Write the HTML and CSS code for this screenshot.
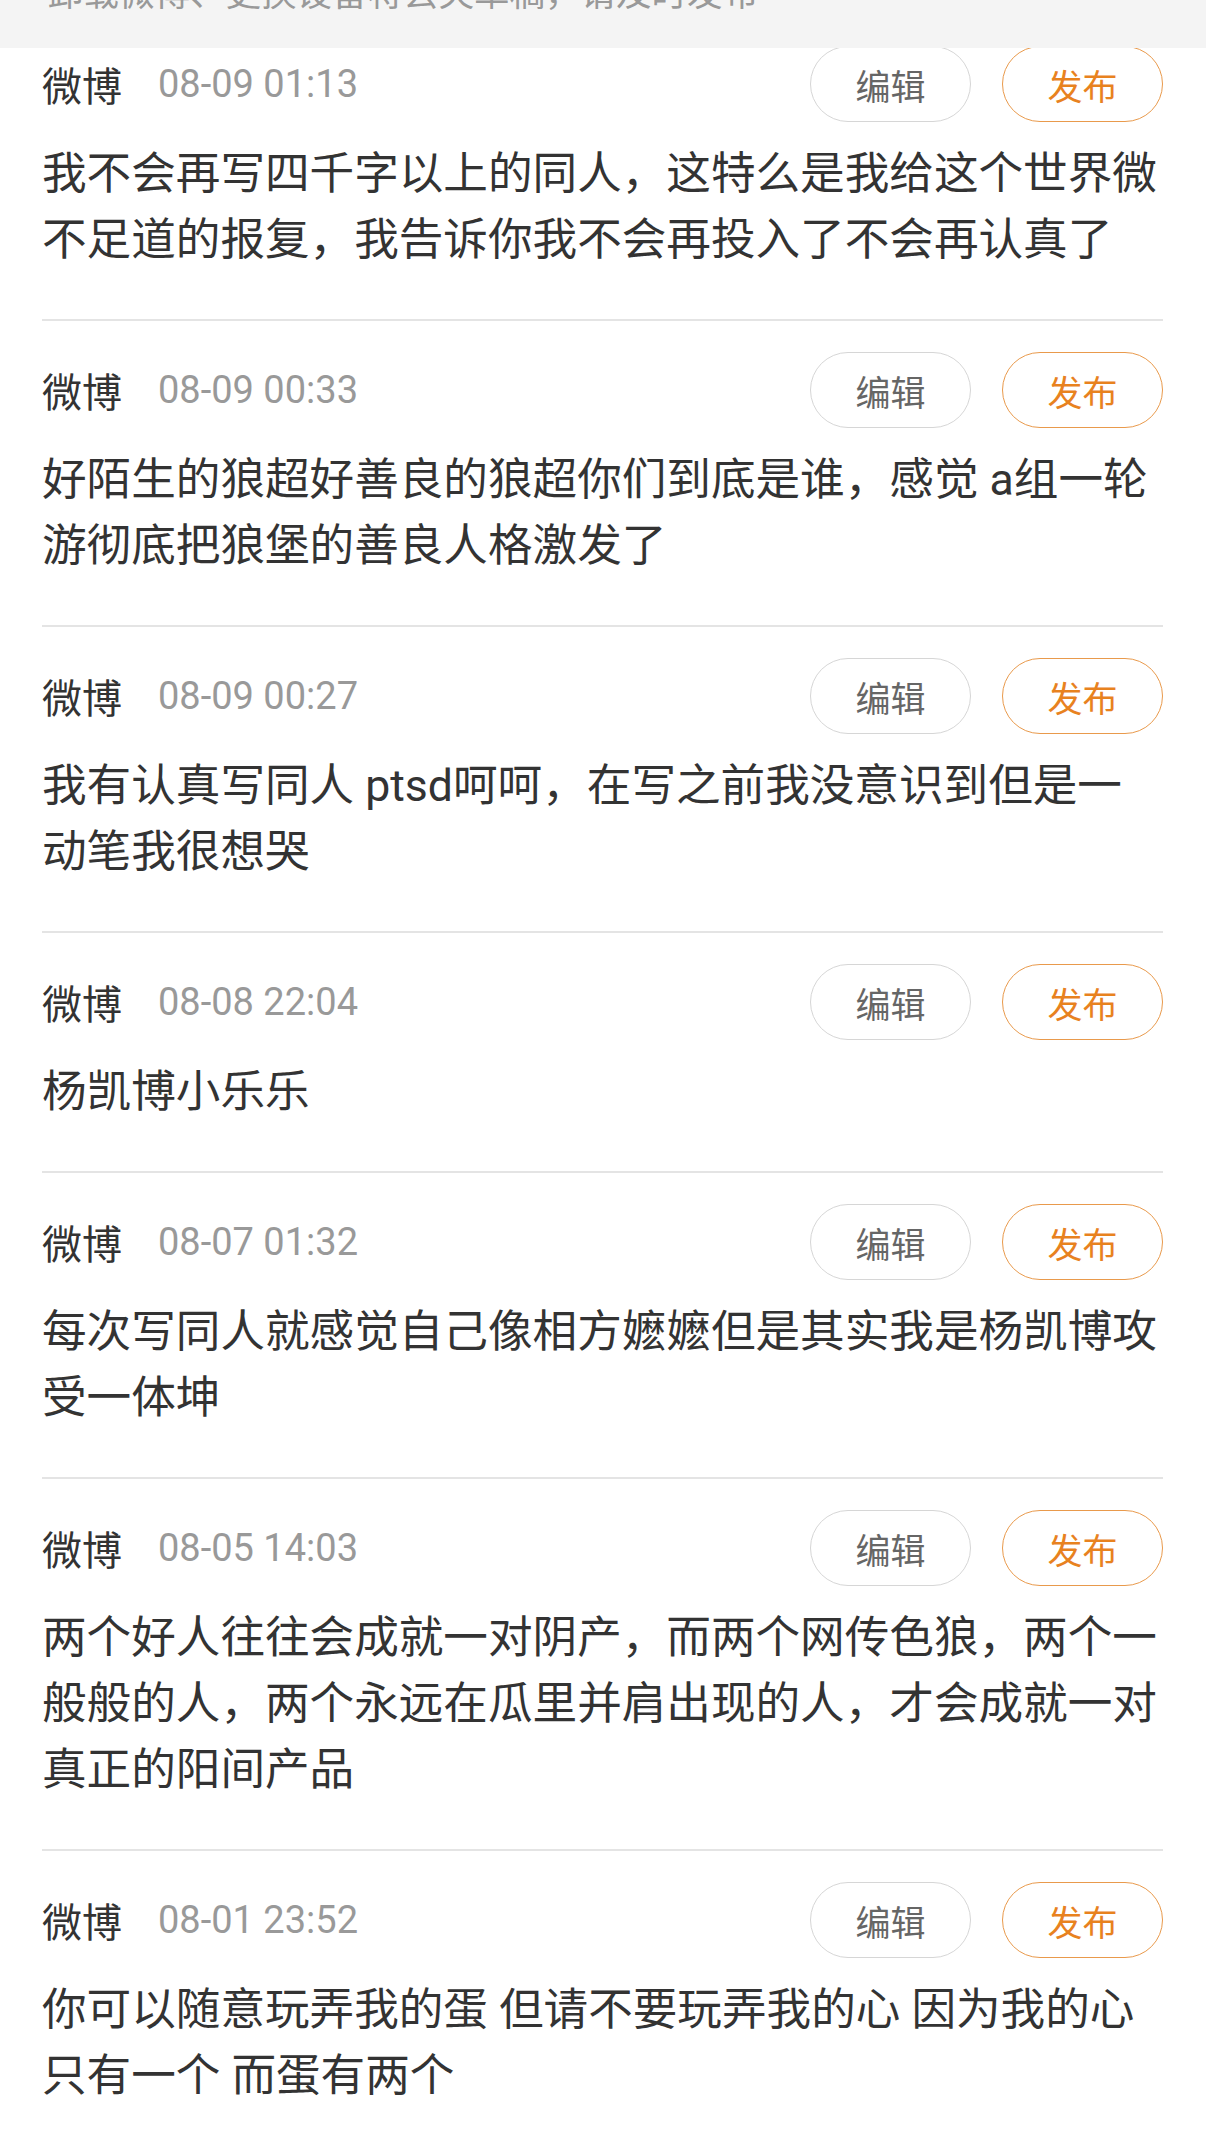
FILE: index.html
```html
<!DOCTYPE html>
<html>

<head>
    <meta charset="UTF-8">
    <title>草稿箱</title>
    <link rel="stylesheet" href="styles.css">
</head>

<body>
    <div class="notice">
        <p class="notice-text">卸载微博、更换设备将丢失草稿，请及时发布</p>
    </div>

    <ul class="drafts">
        <li class="draft">
            <div class="draft-head">
                <span class="source">微博</span>
                <span class="time">08-09 01:13</span>
                <div class="actions">
                    <button class="btn btn-edit">编辑</button>
                    <button class="btn btn-send">发布</button>
                </div>
            </div>
            <p class="draft-text">我不会再写四千字以上的同人，这特么是我给这个世界微不足道的报复，我告诉你我不会再投入了不会再认真了</p>
        </li>
        <li class="draft">
            <div class="draft-head">
                <span class="source">微博</span>
                <span class="time">08-09 00:33</span>
                <div class="actions">
                    <button class="btn btn-edit">编辑</button>
                    <button class="btn btn-send">发布</button>
                </div>
            </div>
            <p class="draft-text">好陌生的狼超好善良的狼超你们到底是谁，感觉 a组一轮游彻底把狼堡的善良人格激发了</p>
        </li>
        <li class="draft">
            <div class="draft-head">
                <span class="source">微博</span>
                <span class="time">08-09 00:27</span>
                <div class="actions">
                    <button class="btn btn-edit">编辑</button>
                    <button class="btn btn-send">发布</button>
                </div>
            </div>
            <p class="draft-text">我有认真写同人 ptsd呵呵，在写之前我没意识到但是一动笔我很想哭</p>
        </li>
        <li class="draft">
            <div class="draft-head">
                <span class="source">微博</span>
                <span class="time">08-08 22:04</span>
                <div class="actions">
                    <button class="btn btn-edit">编辑</button>
                    <button class="btn btn-send">发布</button>
                </div>
            </div>
            <p class="draft-text">杨凯博小乐乐</p>
        </li>
        <li class="draft">
            <div class="draft-head">
                <span class="source">微博</span>
                <span class="time">08-07 01:32</span>
                <div class="actions">
                    <button class="btn btn-edit">编辑</button>
                    <button class="btn btn-send">发布</button>
                </div>
            </div>
            <p class="draft-text">每次写同人就感觉自己像相方嬷嬷但是其实我是杨凯博攻受一体坤</p>
        </li>
        <li class="draft">
            <div class="draft-head">
                <span class="source">微博</span>
                <span class="time">08-05 14:03</span>
                <div class="actions">
                    <button class="btn btn-edit">编辑</button>
                    <button class="btn btn-send">发布</button>
                </div>
            </div>
            <p class="draft-text">两个好人往往会成就一对阴产，而两个网传色狼，两个一般般的人，两个永远在瓜里并肩出现的人，才会成就一对真正的阳间产品</p>
        </li>
        <li class="draft">
            <div class="draft-head">
                <span class="source">微博</span>
                <span class="time">08-01 23:52</span>
                <div class="actions">
                    <button class="btn btn-edit">编辑</button>
                    <button class="btn btn-send">发布</button>
                </div>
            </div>
            <p class="draft-text">你可以随意玩弄我的蛋 但请不要玩弄我的心 因为我的心只有一个 而蛋有两个</p>
        </li>
    </ul>
</body>

</html>
```

FILE: styles.css
```css
body {
    margin: 0;
    background-color: #fff;
    font-family: Roboto, "Noto Sans CJK SC", sans-serif;
    color: #333;
}

.notice {
    position: fixed;
    z-index: 1;
    top: 0;
    left: 0;
    right: 0;
    height: 48px;
    overflow: hidden;
    background-color: #f4f4f4;
}

.notice-text {
    margin: -30px 0 0 0;
    padding-left: 48px;
    font-size: 35.5px;
    line-height: 48px;
    color: #999;
    white-space: nowrap;
}

.drafts {
    list-style: none;
    margin: 15px 43px 0 42px;
    padding: 0;
}

.draft {
    padding: 31px 0 46px 0;
    border-bottom: 2px solid #e4e4e4;
}

.draft-head {
    display: flex;
    align-items: center;
    height: 76px;
}

.source {
    font-size: 40px;
    color: #333;
}

.time {
    margin-left: 36px;
    font-size: 38px;
    color: #999;
}

.actions {
    display: flex;
    gap: 31px;
    margin-left: auto;
}

.btn {
    box-sizing: border-box;
    width: 161px;
    height: 76px;
    padding: 0;
    border: 1.5px solid #d6d6d6;
    border-radius: 38px;
    background-color: #fff;
    font-family: "Noto Sans CJK SC", sans-serif;
    font-size: 35px;
    color: #666;
    cursor: pointer;
}

.btn-send {
    border-color: #e99a4c;
    color: #e8821f;
}

.draft-text {
    margin: 19px 0 0 0;
    font-size: 44.6px;
    line-height: 66px;
    color: #333;
}
```
